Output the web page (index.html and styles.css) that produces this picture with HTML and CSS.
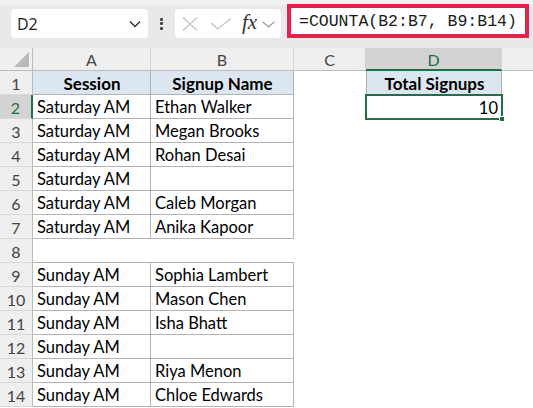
FILE: index.html
```html
<!DOCTYPE html>
<html>
<head>
<meta charset="utf-8">
<link rel="stylesheet" href="styles.css">
</head>
<body>
<div class="app">
  <div class="fbar">
    <div class="namebox">
      <span class="ref">D2</span>
      <svg class="nb-chev" width="12" height="8" viewBox="0 0 12 8"><path d="M1 1.5 L6 6.5 L11 1.5" fill="none" stroke="#333" stroke-width="1.5"/></svg>
    </div>
    <div class="dots"><span></span><span></span><span></span></div>
    <div class="fxbox">
      <svg class="ic-x" width="16" height="14" viewBox="0 0 16 14"><path d="M1 0.5 L15 13.5 M15 0.5 L1 13.5" fill="none" stroke="#c4c4c4" stroke-width="1.3"/></svg>
      <svg class="ic-ok" width="22" height="12" viewBox="0 0 22 12"><path d="M1 5 L7.5 11 L21 0.5" fill="none" stroke="#c4c4c4" stroke-width="1.3"/></svg>
      <span class="fx">fx</span>
      <svg class="ic-chev" width="13" height="7" viewBox="0 0 13 7"><path d="M0.5 0.8 L6.5 6 L12.5 0.8" fill="none" stroke="#9a9a9a" stroke-width="1.2"/></svg>
    </div>
    <div class="formula">=COUNTA(B2:B7, B9:B14)</div>
  </div>
  <div class="sheet">
    <div class="corner"><span class="tri"></span></div>
    <div class="ch">A</div>
    <div class="ch">B</div>
    <div class="ch">C</div>
    <div class="ch sel">D</div>
    <div class="ch last"></div>

    <div class="rh">1</div>
    <div class="t hd">Session</div>
    <div class="t hd">Signup Name</div>
    <div class="c"></div>
    <div class="t hd dl">Total Signups</div>
    <div class="c"></div>

    <div class="rh sel">2</div>
    <div class="t">Saturday AM</div>
    <div class="t">Ethan Walker</div>
    <div class="c"></div>
    <div class="c num active">10<span class="handle"></span></div>
    <div class="c"></div>

    <div class="rh">3</div>
    <div class="t">Saturday AM</div>
    <div class="t">Megan Brooks</div>
    <div class="c"></div><div class="c"></div><div class="c"></div>

    <div class="rh">4</div>
    <div class="t">Saturday AM</div>
    <div class="t">Rohan Desai</div>
    <div class="c"></div><div class="c"></div><div class="c"></div>

    <div class="rh">5</div>
    <div class="t">Saturday AM</div>
    <div class="t"></div>
    <div class="c"></div><div class="c"></div><div class="c"></div>

    <div class="rh">6</div>
    <div class="t">Saturday AM</div>
    <div class="t">Caleb Morgan</div>
    <div class="c"></div><div class="c"></div><div class="c"></div>

    <div class="rh">7</div>
    <div class="t">Saturday AM</div>
    <div class="t">Anika Kapoor</div>
    <div class="c"></div><div class="c"></div><div class="c"></div>

    <div class="rh">8</div>
    <div class="e8"></div>
    <div class="e8"></div>
    <div class="c"></div><div class="c"></div><div class="c"></div>

    <div class="rh">9</div>
    <div class="t">Sunday AM</div>
    <div class="t">Sophia Lambert</div>
    <div class="c"></div><div class="c"></div><div class="c"></div>

    <div class="rh">10</div>
    <div class="t">Sunday AM</div>
    <div class="t">Mason Chen</div>
    <div class="c"></div><div class="c"></div><div class="c"></div>

    <div class="rh">11</div>
    <div class="t">Sunday AM</div>
    <div class="t">Isha Bhatt</div>
    <div class="c"></div><div class="c"></div><div class="c"></div>

    <div class="rh">12</div>
    <div class="t">Sunday AM</div>
    <div class="t"></div>
    <div class="c"></div><div class="c"></div><div class="c"></div>

    <div class="rh">13</div>
    <div class="t">Sunday AM</div>
    <div class="t">Riya Menon</div>
    <div class="c"></div><div class="c"></div><div class="c"></div>

    <div class="rh">14</div>
    <div class="t">Sunday AM</div>
    <div class="t">Chloe Edwards</div>
    <div class="c"></div><div class="c"></div><div class="c"></div>
  </div>
</div>
</body>
</html>
```
FILE: styles.css
```css
* { box-sizing: border-box; }
html, body { margin: 0; padding: 0; }
body {
  width: 533px;
  height: 408px;
  overflow: hidden;
  background: #ffffff;
  font-family: "Lato", "Liberation Sans", sans-serif;
}
.app {
  background: #e9e9e9;
  display: flex;
  flex-direction: column;
}
.fbar {
  display: flex;
  align-items: flex-end;
  height: 38px;
  padding: 4px 0 0 11px;
  margin-bottom: 10px;
  background: linear-gradient(#f2f2f2 0, #f2f2f2 4px, #e9e9e9 6px);
}
.namebox {
  width: 137px;
  height: 29px;
  background: #ffffff;
  border-radius: 4px;
  display: flex;
  align-items: center;
  justify-content: space-between;
  padding: 0 7px 0 6px;
}
.ref {
  font-family: "Open Sans", "Noto Sans", sans-serif;
  font-size: 16px;
  color: #1b1b1b;
}
.dots {
  width: 27px;
  height: 29px;
  display: flex;
  flex-direction: column;
  align-items: center;
  justify-content: center;
  gap: 1.5px;
}
.dots span {
  width: 3px;
  height: 3px;
  background: #444;
  border-radius: 1px;
}
.fxbox {
  width: 106px;
  height: 29px;
  background: #ffffff;
  border-radius: 4px;
  display: flex;
  align-items: center;
  padding-left: 7px;
}
.ic-x { margin-right: 12px; }
.ic-ok { margin-right: 10px; }
.fx {
  font-family: "Liberation Serif", serif;
  font-style: italic;
  font-size: 21px;
  color: #333;
  margin-right: 5px;
  line-height: 1;
  position: relative;
  top: -1px;
}
.ic-chev { margin-top: 2px; }
.formula {
  margin-left: 6px;
  width: 242px;
  height: 34px;
  background: #ffffff;
  border: 4px solid #e0234b;
  font-family: "Liberation Mono", "DejaVu Sans Mono", monospace;
  font-size: 16.5px;
  color: #1a1a1a;
  padding-left: 8px;
  display: flex;
  align-items: center;
}
.sheet {
  display: grid;
  grid-template-columns: 33px 118px 143px 72px 136px 31px;
  grid-template-rows: 23px repeat(14, 24px);
  background: #ffffff;
  font-size: 16.5px;
  color: #000;
}
.corner {
  background: #efefef;
  border-right: 1px solid #bdbdbd;
  border-bottom: 1px solid #bdbdbd;
  position: relative;
}
.tri {
  position: absolute;
  right: 3px;
  bottom: 3px;
  width: 0;
  height: 0;
  border-left: 15px solid transparent;
  border-bottom: 15px solid #b9b9b9;
}
.ch {
  background: #efefef;
  border-right: 1px solid #d4d4d4;
  border-bottom: 1px solid #bdbdbd;
  color: #444;
  display: flex;
  align-items: center;
  justify-content: center;
  font-size: 16px;
  padding-top: 1px;
}
.ch.sel {
  background: #d3d3d3;
  color: #1e6e42;
  border-bottom: 2px solid #1e7145;
  padding-top: 2px;
}
.ch.last { border-right: none; }
.rh {
  background: #efefef;
  border-right: 1px solid #bdbdbd;
  border-bottom: 1px solid #d8d8d8;
  color: #444;
  display: flex;
  align-items: center;
  justify-content: center;
  font-size: 16px;
  padding-top: 1px;
}
.rh.sel {
  background: #d3d3d3;
  color: #1e6e42;
  border-right: 2px solid #1e7145;
}
.c {
  display: flex;
  align-items: center;
  padding: 1px 4px 0;
}
.t {
  border-right: 1px solid #b3b3b3;
  border-bottom: 1px solid #b3b3b3;
  display: flex;
  align-items: center;
  padding: 1px 3px 0 4px;
  white-space: nowrap;
}
.e8 { border-bottom: 1px solid #b3b3b3; }
.hd {
  background: #dce6f1;
  font-weight: bold;
  font-size: 17px;
  justify-content: center;
}
.dl { border-left: 1px solid #b3b3b3; }
.num { justify-content: flex-end; padding-right: 4px; }
.active { position: relative; }
.active::after {
  content: "";
  position: absolute;
  left: -1px;
  top: -1px;
  right: -1px;
  bottom: -1px;
  border: 2px solid #1e7145;
}
.handle {
  position: absolute;
  right: -3px;
  bottom: -3px;
  width: 6px;
  height: 6px;
  background: #1e7145;
  border: 1px solid #ffffff;
  z-index: 2;
}
```
